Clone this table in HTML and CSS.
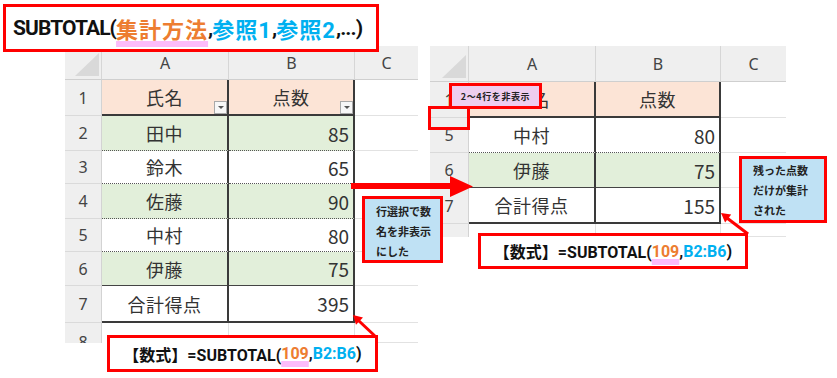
FILE: index.html
```html
<!DOCTYPE html>
<html lang="ja">
<head>
<meta charset="utf-8">
<title>SUBTOTAL</title>
<link rel="stylesheet" href="styles.css">
</head>
<body>
<div class="canvas">

  <div class="sheet sheet-l">
    <div class="hd corner"><i class="tri"></i></div>
    <div class="hd">A</div><div class="hd">B</div><div class="hd hd-c">C</div>

    <div class="rn">1</div>
    <div class="c peach name b-thick">氏名<span class="flt"><i></i></span></div>
    <div class="c peach name b-thick">点数<span class="flt"><i></i></span></div>
    <div class="cc"></div>

    <div class="rn">2</div>
    <div class="c green name b-dot">田中</div>
    <div class="c green num b-dot">85</div>
    <div class="cc"></div>

    <div class="rn">3</div>
    <div class="c name b-dot">鈴木</div>
    <div class="c num b-dot">65</div>
    <div class="cc"></div>

    <div class="rn">4</div>
    <div class="c green name b-dot">佐藤</div>
    <div class="c green num b-dot">90</div>
    <div class="cc"></div>

    <div class="rn">5</div>
    <div class="c name b-dot">中村</div>
    <div class="c num b-dot">80</div>
    <div class="cc"></div>

    <div class="rn">6</div>
    <div class="c green name b-solid">伊藤</div>
    <div class="c green num b-solid">75</div>
    <div class="cc"></div>

    <div class="rn">7</div>
    <div class="c name b-thick">合計得点</div>
    <div class="c num b-thick">395</div>
    <div class="cc"></div>

    <div class="rn rn-cut">8</div>
    <div class="e"></div><div class="e"></div><div class="cc"></div>
  </div>

  <div class="sheet sheet-r">
    <div class="hd corner"><i class="tri"></i></div>
    <div class="hd">A</div><div class="hd">B</div><div class="hd hd-c">C</div>

    <div class="rn">1</div>
    <div class="c peach name b-thick">氏名</div>
    <div class="c peach name b-thick">点数</div>
    <div class="cc"></div>

    <div class="rn">5</div>
    <div class="c name b-dot">中村</div>
    <div class="c num b-dot">80</div>
    <div class="cc"></div>

    <div class="rn">6</div>
    <div class="c green name b-solid">伊藤</div>
    <div class="c green num b-solid">75</div>
    <div class="cc"></div>

    <div class="rn">7</div>
    <div class="c name b-thick">合計得点</div>
    <div class="c num b-thick">155</div>
    <div class="cc"></div>

    <div class="rn rn-cut"></div>
    <div class="e"></div><div class="e"></div><div class="cc"></div>
  </div>

  <div class="title-box">
    <span class="lat">SUBTOTAL(</span><span class="orange mark cjk">集計方法</span><span class="lat">,</span><span class="blue cjk">参照1</span><span class="lat">,</span><span class="blue cjk">参照2</span><span class="lat">,...)</span>
  </div>

  <div class="note note-l">行選択で数<br>名を非表示<br>にした</div>
  <div class="note note-r">残った点数<br>だけが集計<br>された</div>

  <div class="hidden-mark"></div>
  <div class="tag">2～4行を非表示</div>

  <div class="formula formula-l">【数式】=SUBTOTAL(<span class="orange mark">109</span>,<span class="blue">B2:B6</span>)</div>
  <div class="formula formula-r">【数式】=SUBTOTAL(<span class="orange mark">109</span>,<span class="blue">B2:B6</span>)</div>

  <svg class="arrows" width="837" height="378" viewBox="0 0 837 378">
    <polygon points="351,183 450,183 450,176 473,186.5 450,197 450,189 351,189" fill="#ff0000"/>
    <line x1="376" y1="337" x2="358" y2="320" stroke="#ff0000" stroke-width="3"/>
    <polygon points="353,315 363,317.6 356,324.8" fill="#ff0000"/>
    <line x1="748" y1="234" x2="727" y2="218" stroke="#ff0000" stroke-width="3"/>
    <polygon points="721,213 731.2,214.6 725.1,222.5" fill="#ff0000"/>
  </svg>
</div>
</body>
</html>
```

FILE: styles.css
```css
* { box-sizing: border-box; }

body {
  margin: 0;
  background: #ffffff;
}

.canvas {
  position: relative;
  width: 837px;
  height: 378px;
  overflow: hidden;
  background: #ffffff;
  font-family: "Noto Sans CJK JP", sans-serif;
  color: #333333;
}

/* ---------- spreadsheets ---------- */
.sheet {
  position: absolute;
  display: grid;
  background: #ffffff;
}

.sheet-l {
  left: 65px;
  top: 46px;
  grid-template-columns: 37px 127px 126px 63px;
  grid-template-rows: 34px 36px 35px 33px 35px 33px 34px 37px 20px;
}

.sheet-r {
  left: 430px;
  top: 46px;
  grid-template-columns: 39px 127px 125px 65px;
  grid-template-rows: 36px 36px 35px 35px 36px 13px;
}

.hd {
  background: #efefef;
  border-right: 1px solid #d6d6d6;
  border-bottom: 1px solid #cfcfcf;
  display: flex;
  align-items: center;
  justify-content: center;
  font-family: "Noto Sans", "Liberation Sans", sans-serif;
  font-size: 16px;
  color: #444444;
}

.hd-c { border-right: none; }

.corner {
  position: relative;
}

.corner .tri {
  position: absolute;
  right: 2px;
  bottom: 3px;
  width: 24px;
  height: 23px;
  background: #d9d9d9;
  clip-path: polygon(100% 0, 100% 100%, 0 100%);
}

.rn {
  background: #efefef;
  border-right: 1px solid #d3d3d3;
  border-bottom: 1px solid #dadada;
  display: flex;
  align-items: center;
  justify-content: center;
  font-family: "Noto Sans", "Liberation Sans", sans-serif;
  font-size: 16px;
  color: #444444;
}

.rn-cut {
  align-items: flex-start;
  line-height: 20px;
  padding-top: 9px;
  overflow: hidden;
  border-bottom: none;
}

.c {
  position: relative;
  display: flex;
  align-items: center;
  border-right: 2px solid #3a3a3a;
  background: #ffffff;
  color: #333333;
}

.peach { background: #fce4d6; }
.green { background: #e2efda; }

.name {
  justify-content: center;
  font-size: 18px;
  letter-spacing: 0.5px;
}

.num {
  justify-content: flex-end;
  padding-right: 4px;
  font-size: 19px;
}

.b-thick { border-bottom: 2px solid #3a3a3a; }
.b-dot { border-bottom: 1px dotted #555555; }
.b-solid { border-bottom: 1px solid #444444; }

.cc {
  border-bottom: 1px solid #e2e2e2;
  background: #ffffff;
}

.e {
  border-right: 1px solid #e2e2e2;
  background: #ffffff;
}

.flt {
  position: absolute;
  right: 0;
  bottom: 0;
  width: 13px;
  height: 13px;
  background: #f7f7f7;
  border: 1px solid #a9a9a9;
  display: flex;
  align-items: center;
  justify-content: center;
}

.flt i {
  width: 0;
  height: 0;
  border-left: 3px solid transparent;
  border-right: 3px solid transparent;
  border-top: 3px solid #555555;
}

/* ---------- title ---------- */
.title-box {
  position: absolute;
  left: 3px;
  top: 4px;
  width: 376px;
  height: 48px;
  border: 3px solid #ff0000;
  background: #ffffff;
  display: flex;
  align-items: center;
  padding-left: 7px;
  padding-bottom: 1px;
  font-family: Roboto, "Noto Sans CJK JP", sans-serif;
  font-weight: 700;
  font-size: 21px;
  color: #111111;
  white-space: nowrap;
}

.title-box .lat { letter-spacing: -0.9px; }
.title-box .cjk { font-size: 22px; letter-spacing: 1px; }

.orange { color: #ed7d31; }
.blue { color: #00b0f0; }

.mark {
  text-decoration: underline;
  text-decoration-color: #fcbcfa;
  text-decoration-thickness: 6px;
  text-underline-offset: 3px;
  text-decoration-skip-ink: none;
}

/* ---------- notes ---------- */
.note {
  position: absolute;
  border: 3px solid #ff0000;
  background: #bfe1f4;
  font-family: "Noto Sans CJK JP", sans-serif;
  font-size: 11px;
  font-weight: 700;
  line-height: 20px;
  color: #222222;
  padding-left: 11px;
}

.note-l {
  left: 362px;
  top: 196px;
  width: 81px;
  height: 67px;
  padding-top: 2px;
}

.note-r {
  left: 739px;
  top: 156px;
  width: 88px;
  height: 67px;
  padding-top: 1px;
}

.hidden-mark {
  position: absolute;
  left: 428px;
  top: 106px;
  width: 42px;
  height: 24px;
  border: 3px solid #ff0000;
}

.tag {
  position: absolute;
  left: 449px;
  top: 83px;
  width: 93px;
  height: 26px;
  border: 3px solid #ff0000;
  background: #eecdef;
  display: flex;
  align-items: center;
  justify-content: center;
  font-family: "Noto Sans CJK JP", sans-serif;
  font-size: 9px;
  font-weight: 700;
  letter-spacing: 0.6px;
  color: #222222;
  white-space: nowrap;
}

/* ---------- formula boxes ---------- */
.formula {
  position: absolute;
  border: 3px solid #ff0000;
  background: #ffffff;
  display: flex;
  align-items: center;
  justify-content: center;
  font-family: Roboto, "Noto Sans CJK JP", sans-serif;
  font-size: 16px;
  font-weight: 700;
  color: #111111;
  white-space: nowrap;
}

.formula .mark {
  text-underline-offset: 2px;
}

.formula-l {
  left: 107px;
  top: 335px;
  width: 271px;
  height: 37px;
}

.formula-r {
  left: 478px;
  top: 233px;
  width: 270px;
  height: 36px;
}

.arrows {
  position: absolute;
  left: 0;
  top: 0;
  pointer-events: none;
}
```
